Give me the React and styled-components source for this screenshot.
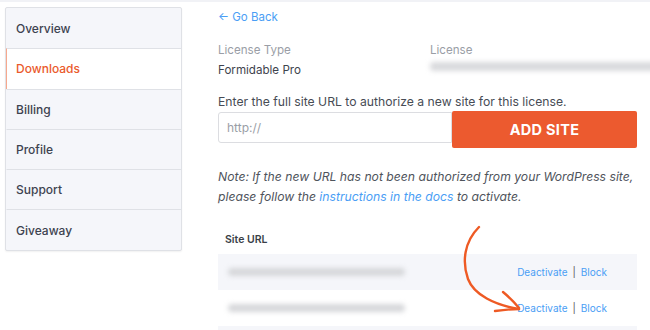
import styled, { createGlobalStyle } from 'styled-components';

const GlobalStyle = createGlobalStyle`
  body {
    margin: 0;
    background: #fff;
    font-family: Inter, "Noto Sans", sans-serif;
    -webkit-font-smoothing: antialiased;
  }
  * { box-sizing: border-box; }
`;

const Page = styled.div`
  width: 650px;
  height: 330px;
  overflow: hidden;
  position: relative;
  display: flex;
  border-top: 2px solid #f1f2f6;
`;

const Sidebar = styled.nav`
  width: 177px;
  margin: 5px 0 0 5px;
  align-self: flex-start;
  border: 1px solid #dfe1e6;
  border-radius: 2px;
  background: #f5f6fa;
  box-shadow: 0 1px 2px rgba(0, 0, 0, 0.06);
`;

const NavItem = styled.div`
  height: 40.3px;
  display: flex;
  align-items: center;
  padding-left: 9px;
  font-size: 12px;
  font-weight: 500;
  color: ${(p) => (p.$active ? '#ea5a2c' : '#3d4350')};
  background: ${(p) => (p.$active ? '#fff' : 'transparent')};
  border-left: 1px solid ${(p) => (p.$active ? '#f6a88d' : 'transparent')};
  & + & {
    border-top: 1px solid #dfe1e6;
  }
`;

const Main = styled.main`
  margin-left: 36px;
  width: 419px;
  padding-top: 7px;
`;

const BackLink = styled.a`
  display: block;
  font-size: 11.5px;
  color: #4a9ef5;
  line-height: 16px;
`;

const LicenseGrid = styled.div`
  display: grid;
  grid-template-columns: 212px 1fr;
  row-gap: 4px;
  margin-top: 17px;
  font-size: 11.6px;
  line-height: 16px;
`;

const Label = styled.div`
  color: #9a9ea6;
`;

const Value = styled.div`
  color: #3e434d;
`;

const Blur = styled.div`
  height: ${(p) => p.$h || 8}px;
  width: ${(p) => p.$w}px;
  background: ${(p) => p.$c || '#d4d5d8'};
  border-radius: 4px;
  filter: blur(2.5px);
`;

const Prompt = styled.p`
  margin: 16px 0 1px;
  font-size: 12.2px;
  line-height: 16px;
  color: #474c55;
`;

const AddRow = styled.div`
  display: flex;
  align-items: flex-start;
`;

const UrlInput = styled.input`
  width: 234px;
  height: 31px;
  margin-top: 1px;
  border: 1px solid #dcdde1;
  border-radius: 3px 0 0 3px;
  padding: 0 8px;
  font-family: inherit;
  font-size: 12px;
  color: #3e434d;
  &::placeholder { color: #9a9ea6; }
`;

const AddButton = styled.button`
  width: 185px;
  height: 37px;
  border: none;
  border-radius: 2px;
  background: #ec5a2f;
  color: #fff;
  font-family: inherit;
  font-weight: 700;
  font-size: 14.5px;
  letter-spacing: 0.3px;
`;

const Note = styled.p`
  margin: 19px 0 0;
  font-size: 12.2px;
  font-style: italic;
  line-height: 20px;
  color: #4f545c;
  a { color: #4a9ef5; text-decoration: none; }
`;

const Table = styled.div`
  margin-top: 26px;
`;

const HeadCell = styled.div`
  padding-left: 7px;
  height: 21px;
  font-size: 10.5px;
  font-weight: 600;
  color: #3a3f48;
`;

const Row = styled.div`
  height: 36px;
  display: flex;
  align-items: center;
  justify-content: space-between;
  padding: 0 30px 0 10px;
  background: ${(p) => (p.$shade ? '#f5f6fa' : '#fff')};
`;

const Actions = styled.div`
  font-size: 10px;
  color: #4a9ef5;
  display: flex;
  gap: 5px;
  span { color: #555; }
`;

const Arrow = styled.svg`
  position: absolute;
  left: 455px;
  top: 213px;
  pointer-events: none;
`;

export default function App() {
  const nav = ['Overview', 'Downloads', 'Billing', 'Profile', 'Support', 'Giveaway'];
  return (
    <>
      <GlobalStyle />
      <Page>
        <Sidebar>
          {nav.map((n) => (
            <NavItem key={n} $active={n === 'Downloads'}>{n}</NavItem>
          ))}
        </Sidebar>
        <Main>
          <BackLink>← Go Back</BackLink>
          <LicenseGrid>
            <Label>License Type</Label>
            <Label>License</Label>
            <Value>Formidable Pro</Value>
            <Blur $w={230} $h={9} $c="#d9dadd" />
          </LicenseGrid>
          <Prompt>Enter the full site URL to authorize a new site for this license.</Prompt>
          <AddRow>
            <UrlInput placeholder="http://" />
            <AddButton>ADD SITE</AddButton>
          </AddRow>
          <Note>
            Note: If the new URL has not been authorized from your WordPress site,
            <br />
            please follow the <a>instructions in the docs</a> to activate.
          </Note>
          <Table>
            <HeadCell>Site URL</HeadCell>
            <Row $shade>
              <Blur $w={177} $c="#d6d7da" />
              <Actions>Deactivate<span>|</span>Block</Actions>
            </Row>
            <Row>
              <Blur $w={177} $c="#d6d7da" />
              <Actions>Deactivate<span>|</span>Block</Actions>
            </Row>
            <Row $shade />
          </Table>
        </Main>
        <Arrow width="80" height="105" viewBox="0 0 80 105">
          <g fill="none" stroke="#ee5a24" strokeWidth="2.4" strokeLinecap="round">
            <path d="M24 12 C 9 27, 7 47, 13 64 C 19 80, 40 90, 64 94" />
            <path d="M48 77 C 54 82, 60 88, 64 93" />
            <path d="M40 96 C 48 95, 56 94, 64 94" />
          </g>
        </Arrow>
      </Page>
    </>
  );
}
